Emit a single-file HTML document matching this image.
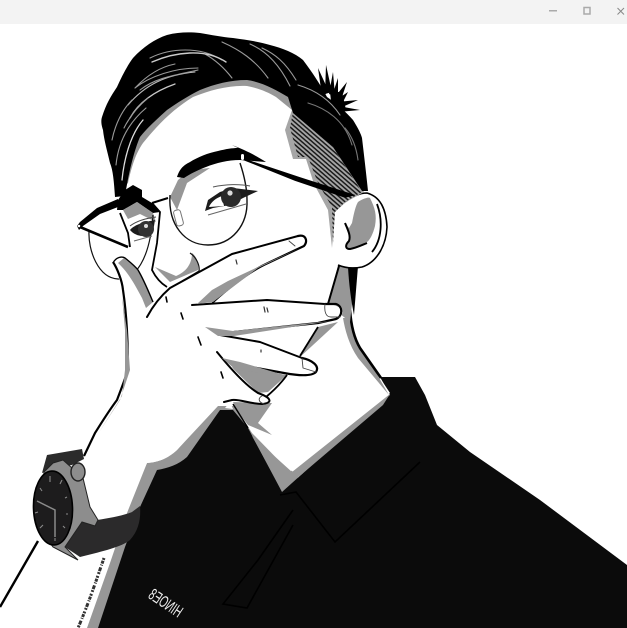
<!DOCTYPE html>
<html><head><meta charset="utf-8"><style>
html,body{margin:0;padding:0;background:#fff;width:627px;height:628px;overflow:hidden}
svg{display:block}
</style></head><body>
<svg width="627" height="628" viewBox="0 0 627 628" xmlns="http://www.w3.org/2000/svg" font-family="'Liberation Sans',sans-serif">
<defs>
<pattern id="h" width="4" height="3.4" patternUnits="userSpaceOnUse" patternTransform="rotate(41)">
<rect width="4" height="3.4" fill="#a6a6a6"/><rect width="4" height="1.5" fill="#1a1a1a"/>
</pattern>
</defs>
<rect width="627" height="628" fill="#fff"/>

<!-- shirt gray edge -->
<path d="M87 628 L110 563 L127 513 C132 495 140 478 147 463 C160 462 168 458 177 450 L218 406 L235 406 L300 480 L392 392 L400 480 L300 628Z" fill="#979797"/>
<!-- shirt -->
<path d="M98 628 L125 547 L140 507 L157 470 C168 468 178 465 187 457 L220 410 L233 410 L248 428 L282 492 L390 395 L380 377 L415 377 L425 395 L437 425 L470 452 L540 500 L627 565 V628Z" fill="#0b0b0b"/>
<!-- neck skin -->
<path d="M252 433 L236 408 L262 392 L318 327 L347 320 L353 337 L390 393 L290 472Z" fill="#fff"/>
<path d="M252 436 L292 472 L390 394 L383 405 L282 491Z" fill="#979797"/>
<path d="M343 318 C345 330 349 345 358 358 L389 395 L364 352 C356 342 352 330 350 318Z" fill="#979797"/>
<path d="M350 310 C351 325 354 338 360 348 L381 378" fill="none" stroke="#000" stroke-width="2.6"/>
<!-- neck upper shadow -->
<path d="M338 266 L328 304 L350 322 L356 268Z" fill="#979797"/>
<path d="M348 267 L358 266 L354 315 C351 300 349 285 348 267Z" fill="#000"/>
<path d="M339 266 L328 304" stroke="#000" stroke-width="2" fill="none"/>
<!-- shadow under fingers -->
<path d="M318 328 L332 320 L290 378 L268 401 L258 418 L246 418 L238 408 L232 372 L260 374 L285 375Z" fill="#fff"/>
<path d="M232 367 L287 375 L268 392 L258 393 L240 378Z" fill="#979797"/>
<path d="M318 327 L338 322 L300 357Z" fill="#979797"/>
<path d="M318 327 L300 356" stroke="#000" stroke-width="1.8" fill="none"/>
<path d="M287 375 C279 386 272 392 266 397" stroke="#000" stroke-width="1.8" fill="none"/>
<path d="M233 402 L272 403 L258 423 L272 435 L248 425 L238 412Z" fill="#979797"/>
<path d="M233 404 L248 428" stroke="#000" stroke-width="1.5" fill="none"/>
<path d="M225 408 L230 402 L233 409Z" fill="#fff"/>

<!-- ear -->
<path d="M345 202 C353 196 361 193 367 193 C378 196 386 206 387 227 C386 248 375 263 362 267 C352 269 345 268 338 265 L333 212Z" fill="#fff"/>
<path d="M345 202 C353 196 361 193 367 193 C378 196 386 206 387 227 C386 248 375 263 362 267 C352 269 345 268 338 265" fill="none" stroke="#000" stroke-width="1.6"/>
<path d="M352 223 C354 212 356 205 358 202 C364 198 369 197 370 198 C375 208 377 215 375 226 C373 234 370 240 367 242 C360 245 355 247 350 248 C345 248 345 244 349 240 C351 235 347 228 345 223 L349 228Z" fill="#979797"/>
<path d="M345 223 C348 230 351 236 349 241 C345 245 345 249 350 249 C356 248 362 245 367 243" fill="none" stroke="#000" stroke-width="2"/>
<path d="M377 204 C383 220 382 240 372 252" stroke="#000" stroke-width="1.8" fill="none"/>

<!-- hatch side -->
<path d="M292 110 L285 130 L293 159 L306 159 L314 184 L328 210 L332 248 L335 212 L346 202 L364 192 L335 146Z" fill="#a6a6a6"/>
<path d="M293 112 L290 128 L298 157 L308 157 L318 183 L332 207 L333 243 L335 212 L345 202 L362 192 L333 147Z" fill="url(#h)"/>

<!-- gray under hair -->
<path d="M120 190 L128 183 C132 165 136 153 143 143 C160 122 175 108 193 97 C210 90 230 85 247 86 C258 88 268 92 276 97 L292 110 L296 96 L250 74 L190 80 L135 130 Z" fill="#979797"/>

<!-- hair -->
<path d="M115 197 C114 182 113 170 110 163 C107 150 104 140 103 130 C101 124 101 120 102 117 C106 104 111 96 117 87 C122 76 127 66 133 58 C143 47 155 39 167 35 C178 32 190 32 200 33 C212 35 222 37 233 38 C248 40 260 42 270 45 C282 48 295 53 303 60 C312 72 320 84 327 97 C337 104 346 112 353 120 C358 128 361 134 362 138 C364 155 366 172 368 191 L362 191 L333 147 L293 113 L288 97 C276 90 262 82 247 80 C230 80 215 84 200 90 C188 96 177 103 167 110 C156 120 147 128 140 137 C136 146 130 165 125 196 Z" fill="#000"/>
<!-- tuft -->
<g fill="#000">
<path d="M322 96 L318 68 L329 92Z"/>
<path d="M325 94 L326 65 L332 92Z"/>
<path d="M329 94 L333 72 L335 96Z"/>
<path d="M332 96 L338 78 L338 100Z"/>
<path d="M334 98 L347 82 L340 103Z"/>
<path d="M336 100 L348 92 L341 106Z"/>
<path d="M337 102 L358 100 L340 108Z"/>
<path d="M338 106 L360 110 L338 112Z"/>
<path d="M330 92 L342 92 L346 110 L332 110Z"/>
</g>
<!-- hair highlights -->
<g fill="none" stroke="#9a9a9a" stroke-width="1.1" stroke-linecap="round">
<path d="M150 58 C170 48 200 46 222 60"/>
<path d="M205 54 C212 58 222 65 232 78"/>
<path d="M152 62 C175 52 205 48 226 62" stroke="#ccc" stroke-width="1.4"/>
<path d="M135 88 C150 76 175 68 198 68"/>
<path d="M135 88 C150 72 165 66 175 64"/>
<path d="M128 105 C145 85 165 75 195 72" stroke="#bbb"/>
<path d="M140 90 C155 78 175 75 198 70"/>
<path d="M130 118 C140 100 158 90 175 84" stroke="#c8c8c8" stroke-width="1.3"/>
<path d="M124 128 C132 112 142 103 148 98"/>
<path d="M116 165 C118 145 126 125 146 108"/>
<path d="M122 180 C124 160 130 135 143 120" stroke="#ddd" stroke-width="1.3"/>
<path d="M112 140 C115 125 122 110 132 100"/>
<path d="M222 42 C240 50 255 60 268 78"/>
<path d="M250 44 C268 52 280 66 290 86"/>
<path d="M262 48 C275 54 285 62 296 80"/>
<path d="M308 103 C325 108 345 120 352 145" stroke="#777"/>
<path d="M298 85 C315 90 330 100 340 115"/>
<path d="M345 128 C351 135 356 145 358 160" stroke="#777"/>
</g>

<!-- under brow gray -->
<path d="M178 180 L170 197 L177 210 L187 183 L210 168 L190 170Z" fill="#979797"/>
<!-- brows -->
<path d="M177 177 C180 168 184 165 190 162 C198 157 208 153 218 151 C226 149 232 148 238 148 L232 145 C245 150 255 155 266 162 L240 160 C228 160 216 163 206 167 C198 170 190 174 184 178Z" fill="#000"/>
<path d="M117 210 L118 200 L125 190 L133 185 L142 190 L142 197 L152 203 L160 212 L153 213 L137 202 L123 210Z" fill="#000"/>
<path d="M123 210 L137 202 L153 213 L156 222 L140 214 L128 219Z" fill="#979797"/>
<!-- glasses -->
<path d="M170 195 C168 225 185 245 208 245 C232 245 248 225 247 200 C247 185 243 172 240 163" fill="none" stroke="#111" stroke-width="1.4"/>
<path d="M89 231 C88 250 98 278 118 279 C135 280 150 260 153 215" fill="none" stroke="#111" stroke-width="1.2"/>
<path d="M77 226 L80 222 L97 208 L118 199 L118 207 L100 214 L83 226 L79 230Z" fill="#000"/>
<circle cx="79" cy="226" r="1.3" fill="#fff"/>
<path d="M80 227 L128 247" stroke="#000" stroke-width="2.6"/>
<path d="M152 203 L168 198" stroke="#000" stroke-width="2"/>
<path d="M240 158 L300 178 L353 195 L345 197 L295 180Z" fill="#000" stroke="#000" stroke-width="1.5"/>
<rect x="241" y="154" width="3" height="6" rx="1.5" fill="#fff"/>
<rect x="175" y="210" width="7" height="16" rx="2.5" transform="rotate(-15 178 218)" fill="#fff" stroke="#777" stroke-width="1"/>
<path d="M120 213 L128 233 L130 247 M152 203 L160 212 L157 243 L152 270 C156 278 162 284 167 287" stroke="#000" stroke-width="1.8" fill="none"/>

<!-- eyes -->
<path d="M205 211 L208 200 L220 192 L233 188 L258 191 L243 198 L230 205 L213 208Z" fill="#1c1c1c"/>
<path d="M209 207 C211 202 216 198 222 196 L224 206Z" fill="#fff"/>
<circle cx="231" cy="197" r="10" fill="#2a2a2a"/>
<circle cx="230" cy="193" r="2.6" fill="#ddd"/>
<path d="M208 215 L246 204" stroke="#666" stroke-width="1" fill="none"/>
<path d="M213 187 C226 184 240 184 250 186" stroke="#555" stroke-width="1" fill="none"/>
<path d="M130 230 C135 224 145 222 155 220 L153 232 C146 238 136 237 130 230Z" fill="#1c1c1c"/>
<circle cx="146" cy="229" r="8" fill="#333"/><circle cx="146" cy="226" r="2" fill="#ddd"/>
<path d="M130 226 C138 220 148 218 156 217" stroke="#444" stroke-width="1" fill="none"/>
<path d="M134 241 L152 236" stroke="#666" stroke-width="1" fill="none"/>

<!-- nose -->
<path d="M155 267 L170 282 L198 270 C199 262 196 256 192 253 C192 264 186 272 176 276Z" fill="#979797"/>
<path d="M190 253 C196 257 200 265 199 271 L182 281" fill="none" stroke="#111" stroke-width="1.2"/>

<!-- hand -->
<path d="M113 262 C116 257 122 256 124 257 L135 267 C142 275 150 295 153 300 L170 287 L233 255 L298 236 C304 234 307 240 304 246 L268 264 L232 285 L212 303 L267 300 L325 304 C338 304 344 310 342 314 C340 320 332 322 318 323 L234 333 L218 334 L260 342 L300 358 C312 360 320 366 317 372 C312 377 300 376 284 373 L240 365 L216 352 L258 393 L270 398 L268 403 L253 403 L233 398 L223 401 L216 406 L177 450 C168 458 160 462 147 463 L127 513 L98 520 L83 478 L83 457 L95 433 L117 400 L128 370 L127 330 L123 290 Z" fill="#fff"/>
<!-- gray shading thumb -->
<path d="M118 263 L124 258 L135 267 C142 275 150 295 153 302 L146 308 L142 298 C135 285 128 272 118 263Z" fill="#979797"/>
<path d="M113 262 C117 268 122 280 123 290 C126 310 128 340 128 370 C124 382 120 392 117 400 C108 412 102 422 95 433 L84 456" fill="none" stroke="#000" stroke-width="2.2"/>
<path d="M122 296 L127 330 L130 370 L120 400 L98 434 L122 396 L125 370 L125 330Z" fill="#979797"/>
<path d="M113 263 C116 257 122 256 125 258 C130 262 135 266 138 270 C144 280 150 295 153 302" fill="none" stroke="#000" stroke-width="1.4"/>
<!-- fingers outlines -->
<g fill="none" stroke="#000" stroke-linecap="round" stroke-linejoin="round">
<path d="M147 317 C155 302 163 294 170 288 L232 254 L298 236" stroke-width="2"/>
<path d="M298 236 C306 234 308 241 304 246 L268 263 C250 271 232 285 213 302" stroke-width="2.2"/>
<path d="M192 305 L267 300 L325 304" stroke-width="2"/>
<path d="M325 304 L336 304 C343 306 343 316 336 319 L318 323 L234 332" stroke-width="2.2"/>
<path d="M220 335 L260 342 L302 358" stroke-width="2"/>
<path d="M302 358 C312 360 320 366 316 372 C312 376 300 376 284 373 L240 365" stroke-width="2.2"/>
<path d="M217 352 C230 368 245 385 258 393 C272 398 273 403 262 404 C250 404 240 399 232 400 L224 402" stroke-width="2"/>
<path d="M325 304 C324 312 326 317 331 317 L340 317 M302 358 L303 368 L316 372 M262 396 C258 398 258 402 264 404 M289 241 L295 246" stroke-width="0.9" stroke="#444"/>
<path d="M166 297 L167 302 M181 313 L183 319 M198 337 L201 345 M221 372 L223 378" stroke-width="1.6"/>
<path d="M264 307 L265 312 M267 308 L268 312 M261 350 L261 352 M236 260 L237 264" stroke-width="1.2" stroke="#333"/>
</g>
<!-- finger shadows -->
<path d="M197 304 L213 302 L258 268 L300 248 L260 266 L228 281 L212 290Z" fill="#979797"/>
<path d="M205 327 L218 336 L234 336 L318 323 L332 321 L233 331 Z" fill="#979797"/>
<path d="M222 358 L236 370 L284 375 L240 362Z" fill="#979797"/>

<!-- watch strap -->
<path d="M42 473 L47 455 L82 449 L84 459 L72 465 L56 468Z" fill="#2b2b2b"/>
<path d="M97 520 C110 518 125 515 132 512 L140 506 C141 518 139 530 130 540 C122 547 100 552 80 557 L65 547 L82 522Z" fill="#2b2a2b"/>
<!-- watch case -->
<path d="M44 472 L53 463 L63 460 L72 468 L83 478 L90 507 L98 520 L95 526 L82 522 L65 547 L78 560 L53 547 L40 530Z" fill="#8d8d8d" stroke="#222" stroke-width="1"/>
<ellipse cx="78" cy="472" rx="7" ry="9" fill="#8d8d8d" stroke="#222" stroke-width="1.4"/>
<ellipse cx="53" cy="508" rx="19.5" ry="37" transform="rotate(-2 53 508)" fill="#1d1c1d" stroke="#000" stroke-width="1.6"/>
<g stroke="#8a8a8a" stroke-width="1.1" fill="none">
<path d="M37 501 L55 510 L55 537" stroke-width="1.5"/>
<path d="M50 476 L50 482 M62 480 L60 484 M67 497 L65 498 M68 514 L66 514 M65 528 L63 526 M40 488 L42 491 M35 513 L38 512 M40 528 L43 525 M55 541 L55 538"/>
</g>
<!-- arm line -->
<path d="M38 541 L0 607" stroke="#000" stroke-width="2.4"/>
<!-- tattoo -->
<path d="M104 558 C98 575 90 600 78 628" fill="none" stroke="#333" stroke-width="3" stroke-dasharray="2 1 3 1 1 2 4 1 2 2"/>
<!-- collar lines -->
<g fill="none" stroke="#000" stroke-width="1.6">
<path d="M280 495 L296 492 L335 542 L420 462"/>
<path d="M293 510 L258 560 L223 604 L247 608 L293 525"/>
</g>
<!-- logo -->
<text transform="translate(178,618) rotate(34) scale(-1,1.5)" font-size="11" fill="#eee" textLength="37" lengthAdjust="spacingAndGlyphs">HINOE8</text>

<!-- top bar -->
<rect width="627" height="24" fill="#f3f3f3"/>
<rect x="549" y="10" width="8" height="1.5" fill="#aaa"/>
<rect x="584" y="7.5" width="6" height="6.5" fill="none" stroke="#aaa" stroke-width="1.5"/>
<path d="M617.5 8 L624 14.5 M624 8 L617.5 14.5" stroke="#888" stroke-width="1"/>
</svg>
</body></html>
